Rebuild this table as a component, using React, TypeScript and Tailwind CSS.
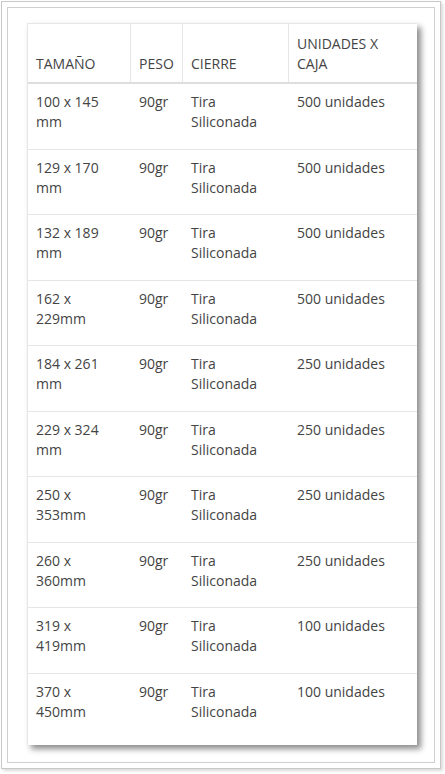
import React from "react";

const rows: [string, string, string, string][] = [
  ["100 x 145 mm", "90gr", "Tira Siliconada", "500 unidades"],
  ["129 x 170 mm", "90gr", "Tira Siliconada", "500 unidades"],
  ["132 x 189 mm", "90gr", "Tira Siliconada", "500 unidades"],
  ["162 x 229mm", "90gr", "Tira Siliconada", "500 unidades"],
  ["184 x 261 mm", "90gr", "Tira Siliconada", "250 unidades"],
  ["229 x 324 mm", "90gr", "Tira Siliconada", "250 unidades"],
  ["250 x 353mm", "90gr", "Tira Siliconada", "250 unidades"],
  ["260 x 360mm", "90gr", "Tira Siliconada", "250 unidades"],
  ["319 x 419mm", "90gr", "Tira Siliconada", "100 unidades"],
  ["370 x 450mm", "90gr", "Tira Siliconada", "100 unidades"],
];

const cols = "grid grid-cols-[103px_52px_106px_129px]";

export default function App() {
  return (
    <div
      className="bg-white w-[445px] h-[774px] pt-px pl-px text-[14px] leading-[20px] text-[#444]"
      style={{ fontFamily: '"Open Sans", "Noto Sans", sans-serif' }}
    >
      <div className="w-[440px] h-[768px] border border-[#c8c8c8] p-[5px] shadow-[2px_2px_3px_rgba(0,0,0,0.15)]">
        <div className="h-full border border-[#cfcfcf] pl-[19px] pt-[15px]">
          <div className="w-[390px] bg-white border-t border-l border-[#e6e6e6] pb-[6px] shadow-[4px_4px_6px_rgba(0,0,0,0.45)]">
            <div className={`${cols} border-b-2 border-[#dedede]`}>
              {["TAMAÑO", "PESO", "CIERRE", "UNIDADES X CAJA"].map((h, i) => (
                <div
                  key={h}
                  className={`flex items-end h-[58px] pl-[8px] pr-[8px] pb-[8px] ${i < 3 ? "border-r border-[#e6e6e6]" : ""}`}
                >
                  <span>{h}</span>
                </div>
              ))}
            </div>
            {rows.map((r, ri) => (
              <div
                key={ri}
                className={`${cols} h-[65.5px] ${ri < rows.length - 1 ? "border-b border-[#e6e6e6]" : ""}`}
              >
                {r.map((c, ci) => (
                  <div key={ci} className="pl-[8px] pr-[8px] pt-[8px]">
                    {c}
                  </div>
                ))}
              </div>
            ))}
          </div>
        </div>
      </div>
    </div>
  );
}
